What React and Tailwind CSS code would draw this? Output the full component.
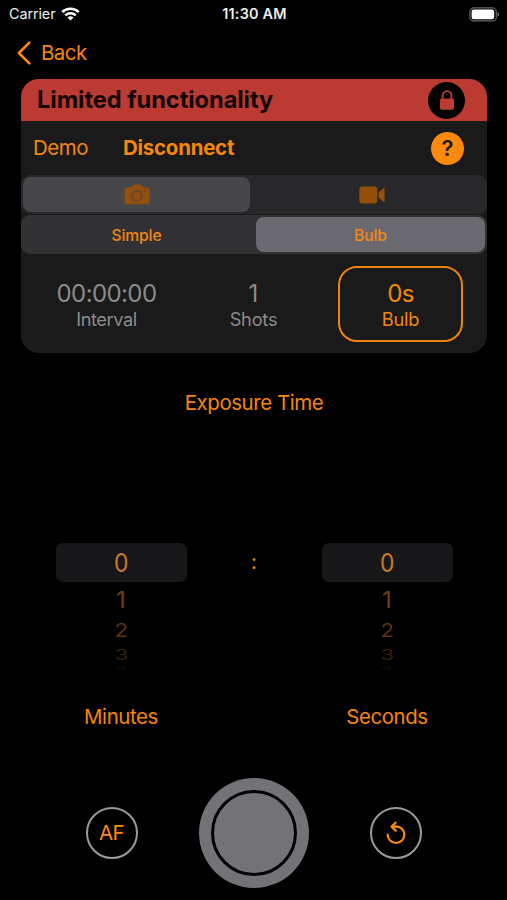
const WifiIcon = () => (
    <svg className="w-[19px] h-[14px]" viewBox="0 0 19 14" fill="none" stroke="#fff" strokeWidth="2.5">
        <path d="M1.2 5.2a11.8 11.8 0 0 1 16.6 0" />
        <path d="M4.3 8.4a7.4 7.4 0 0 1 10.4 0" />
        <path d="M9.5 13.6 6.5 10.6a4.3 4.3 0 0 1 6 0z" fill="#fff" stroke="none" />
    </svg>
);

const BatteryIcon = () => (
    <svg className="w-[31px] h-[15px]" viewBox="0 0 31 15" fill="none">
        <rect x="0.9" y="0.9" width="26.4" height="13" rx="4" stroke="#666" strokeWidth="1.2" />
        <rect x="2.6" y="2.6" width="22.6" height="9.6" rx="2.2" fill="#fff" />
        <path d="M28.6 5.2q1.6 .6 1.6 2.2t-1.6 2.2z" fill="#777" />
    </svg>
);

const LockIcon = () => (
    <svg className="w-[16px] h-[20px]" viewBox="0 0 16 20">
        <path d="M3.6 9V5.5a4.4 4.4 0 0 1 8.8 0V9" fill="none" stroke="#bb3a32" strokeWidth="1.9" />
        <rect x="1" y="8.4" width="14" height="11.3" rx="1.6" fill="#bb3a32" />
    </svg>
);

const CameraIcon = () => (
    <svg className="w-[26px] h-[21px]" viewBox="0 0 26 21">
        <path
            d="M3 3.4h4.2l1.4-2Q9.3.6 10.2.6h5.6q.9 0 1.6.8l1.4 2H23q2.5 0 2.5 2.5v11.8q0 2.5-2.5 2.5H3q-2.5 0-2.5-2.5V5.9q0-2.5 2.5-2.5z"
            fill="#944f0b"
        />
        <circle cx="13" cy="11.7" r="5" fill="none" stroke="#5a4a3c" strokeWidth="1.6" />
        <circle cx="20.7" cy="7.5" r="1.1" fill="#5a4a3c" />
    </svg>
);

const VideoIcon = () => (
    <svg className="w-[26px] h-[18px]" viewBox="0 0 26 18" fill="#944f0b">
        <rect x="0.3" y="0.5" width="18" height="17" rx="3.2" />
        <path d="M19.6 6.5 24 2.4q1.6-1 1.6.5v12.2q0 1.5-1.6.5l-4.4-4.1z" />
    </svg>
);

const ResetIcon = () => (
    <svg className="w-[20px] h-[24px]" viewBox="0 0 20 24" fill="none" stroke="#ff8a0a" strokeWidth="2.2" strokeLinecap="round" strokeLinejoin="round">
        <path d="M1.7 13.7A8.3 8.3 0 1 0 10 5.4L6 5.6" />
        <path d="M9.6 1.7 5.6 5.6l4.2 4.2" />
    </svg>
);

const wheel = [
    { height: 'h-[35px]', scale: 'scale-y-[0.96]', color: 'text-[#70400f]' },
    { height: 'h-[28px]', scale: 'scale-y-[0.80] scale-x-[0.92]', color: 'text-[#5c340c]' },
    { height: 'h-[19px]', scale: 'scale-y-[0.58] scale-x-[0.92]', color: 'text-[#352009]' },
    { height: 'h-[8px]', scale: 'scale-y-[0.20] scale-x-[0.92]', color: 'text-[#140c04]' },
];

const Picker = ({ label }) => (
    <div className="w-[131px] flex flex-col items-center">
        <div className="w-full h-[39px] rounded-[7px] bg-[#171719] flex items-center justify-center text-[26px] text-[#c87a2a]">
            <span className="scale-x-[0.88]">0</span>
        </div>
        <div className="h-[113px] flex flex-col items-center text-[24px] leading-none">
            {wheel.map((row, i) => (
                <div key={i} className={`${row.height} ${row.color} flex items-center justify-center`}>
                    <span className={row.scale}>{i + 1}</span>
                </div>
            ))}
        </div>
        <div className="h-[44px] flex items-center text-[20.4px] tracking-[-0.4px]">{label}</div>
    </div>
);

const App = () => {
    return (
        <div className="w-[507px] h-[900px] overflow-hidden bg-black text-[#f5860f] font-['Inter',sans-serif] whitespace-nowrap flex flex-col">
            <header className="h-[28px] shrink-0 grid grid-cols-3 items-center pl-[9px] pr-[7px] text-[14.4px] text-[#eee]">
                <div className="flex items-center gap-[6px]">
                    <span className="tracking-[-0.1px]">Carrier</span>
                    <WifiIcon />
                </div>
                <span className="text-center font-semibold tracking-[0.2px]">11:30 AM</span>
                <div className="flex justify-end"><BatteryIcon /></div>
            </header>

            <nav className="h-[51px] shrink-0 flex items-center pl-[17px] pb-px gap-[10px]">
                <svg className="w-[14px] h-[24px]" viewBox="0 0 14 24" fill="none" stroke="#ff8a0a" strokeWidth="2.6" strokeLinecap="round" strokeLinejoin="round">
                    <path d="M12.3 1.6 1.9 12l10.4 10.4" />
                </svg>
                <span className="text-[20.4px] tracking-[-0.5px]">Back</span>
            </nav>

            <main className="w-[466px] h-[274px] shrink-0 ml-[21px] rounded-[18px] overflow-hidden bg-[#1a1a1a] flex flex-col">
                <div className="h-[42px] shrink-0 bg-[#bb3a32] flex items-center justify-between pl-[16px] pr-[22px]">
                    <span className="text-[23.6px] font-bold tracking-[-0.05px] text-[#120303]">Limited functionality</span>
                    <span className="w-[37px] h-[37px] rounded-full bg-black flex items-center justify-center"><LockIcon /></span>
                </div>
                <div className="h-[54px] shrink-0 flex items-center pl-[12px] pr-[23px]">
                    <span className="w-[90px] text-[20.4px] tracking-[-0.4px]">Demo</span>
                    <span className="text-[20.4px] font-bold tracking-[-0.2px]">Disconnect</span>
                    <span className="ml-auto w-[33px] h-[33px] rounded-full bg-[#ff8a0a] text-[#1a1a1a] text-[22px] font-semibold flex items-center justify-center">?</span>
                </div>
                <div className="h-[39px] shrink-0 rounded-[9px] bg-[#28282a] p-[2px] grid grid-cols-2">
                    <div className="rounded-[8px] bg-[#47464a] mr-[4px] flex items-center justify-center"><CameraIcon /></div>
                    <div className="flex items-center justify-center pl-[4px]"><VideoIcon /></div>
                </div>
                <div className="mt-px h-[39px] shrink-0 rounded-[9px] bg-[#323234] p-[2px] grid grid-cols-2 text-[15.6px] font-medium tracking-[-0.1px]">
                    <div className="flex items-center justify-center pt-[2px] pr-[4px]">Simple</div>
                    <div className="rounded-[8px] bg-[#6b6a70] ml-[2px] pt-[2px] flex items-center justify-center">Bulb</div>
                </div>
                <div className="flex-1 grid grid-cols-3 items-center pl-[12px] pr-[13px] text-[#8b8b8b]">
                    <div className="flex flex-col items-center pt-[4px]">
                        <span className="text-[24px] leading-[27px] tracking-[-0.6px]">00:00:00</span>
                        <span className="text-[18.2px] leading-[24px] tracking-[-0.4px]">Interval</span>
                    </div>
                    <div className="flex flex-col items-center pt-[4px]">
                        <span className="text-[24px] leading-[27px]">1</span>
                        <span className="text-[18.2px] leading-[24px] tracking-[-0.2px]">Shots</span>
                    </div>
                    <div className="w-[125px] h-[76px] mx-auto rounded-[19px] border-[2.5px] border-[#ef8310] text-[#f5860f] pt-[4px] flex flex-col items-center justify-center">
                        <span className="text-[24px] leading-[27px] tracking-[-0.6px]">0s</span>
                        <span className="text-[18.2px] leading-[24px] tracking-[-0.2px]">Bulb</span>
                    </div>
                </div>
            </main>

            <h2 className="mt-[38px] h-[25px] shrink-0 flex items-center justify-center pl-px text-[20.4px] tracking-[-0.4px]">Exposure Time</h2>

            <section className="mt-[127px] shrink-0 flex justify-center pl-px">
                <Picker label="Minutes" />
                <span className="w-[135px] h-[39px] flex items-center justify-center text-[20.4px]">:</span>
                <Picker label="Seconds" />
            </section>

            <footer className="mt-[39px] shrink-0 flex items-center justify-center gap-[61px]">
                <button className="w-[52px] h-[52px] rounded-full border-[2.5px] border-[#9a9a9c] flex items-center justify-center text-[20.4px] tracking-[-0.5px] text-[#ff8a0a]">AF</button>
                <button className="w-[110px] h-[110px] rounded-full bg-[#737277] flex items-center justify-center">
                    <span className="w-[86px] h-[86px] rounded-full border-[3px] border-black"></span>
                </button>
                <button className="w-[52px] h-[52px] rounded-full border-[2.5px] border-[#9a9a9c] flex items-center justify-center"><ResetIcon /></button>
            </footer>
        </div>
    );
};

export default App;
